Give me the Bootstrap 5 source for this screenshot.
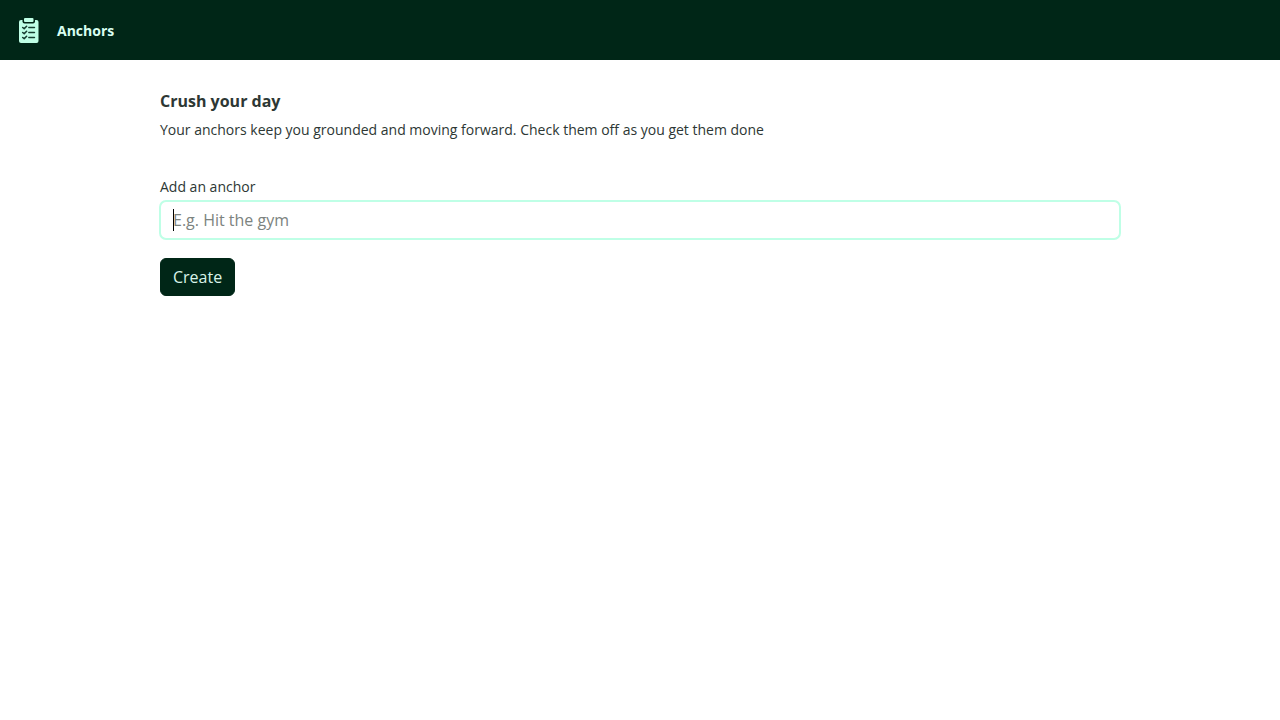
<!DOCTYPE html>
<html lang="en">
<head>
<meta charset="utf-8">
<meta name="viewport" content="width=device-width, initial-scale=1">
<title>Anchors</title>
<link href="https://cdn.jsdelivr.net/npm/bootstrap@5.3.0/dist/css/bootstrap.min.css" rel="stylesheet">
<style>
  :root { --ink: #002617; --mint: #bfffe6; --text: #2d3734; }
  body { font-family: "Open Sans", sans-serif; font-size: 14px; line-height: 20px; color: var(--text); }
  .topbar { background: var(--ink); min-height: 60px; padding: 0 16px; }
  .brand-link, .brand-link:hover { color: #d9fff1; font-size: 14px; font-weight: 700; gap: 16px; padding: 0; margin: 0; line-height: 20px; }
  .brand-name { padding-top: 2px; }
  .page { max-width: 960px; padding-top: 88px; }
  .page-title { font-size: 16px; line-height: 26px; font-weight: 700; margin-bottom: 6px; }
  .intro { margin-bottom: 37px; }
  .anchor-label { margin-bottom: 4px; }
  .field { margin-bottom: 19px; }
  .anchor-input { color: var(--ink); border-color: var(--mint); border-radius: 6px; height: 38px; padding: 6px 12px; }
  .anchor-input, .anchor-input:focus { border-color: var(--mint); box-shadow: 0 0 0 1px var(--mint); }
  .anchor-input::placeholder { color: #7c8380; }
  .caret { left: 13px; top: 8px; width: 1px; height: 22px; background: #000; pointer-events: none; }
  .create-btn, .create-btn:hover { background: var(--ink); border-color: var(--ink); color: #d9f3e9; }
</style>
</head>
<body>
<nav class="navbar fixed-top topbar">
  <a class="navbar-brand brand-link d-flex align-items-center" href="#">
    <svg width="25" height="27" viewBox="0 0 25 27" aria-hidden="true">
      <path fill="#bfffe6" d="M5 3h15.500a2 2 0 0 1 2 2v19a2 2 0 0 1-2 2H5a2 2 0 0 1-2-2V5a2 2 0 0 1 2-2z"/>
      <path fill="#002617" d="M6.500 3h12.500v1.500a2 2 0 0 1-2 2h-8.500a2 2 0 0 1-2-2z"/>
      <path fill="#bfffe6" d="M9 1h7.500a1 1 0 0 1 1 1v2a1 1 0 0 1-1 1H9a1 1 0 0 1-1-1V2a1 1 0 0 1 1-1z"/>
      <g fill="none" stroke="#173d30" stroke-width="1.600" stroke-linecap="round" stroke-linejoin="round">
        <path d="M6.700 10.500l1.500 1.200 2.400-2.400M6.700 15.500l1.500 1.200 2.400-2.400M6.700 20.500l1.500 1.200 2.400-2.400"/>
        <path stroke-width="1.400" d="M12.800 10.500h5.700M12.800 15.500h5.700M12.800 20.500h5.700"/>
      </g>
    </svg>
    <span class="brand-name">Anchors</span>
  </a>
</nav>
<main class="page container-fluid px-3 px-lg-0">
  <h1 class="page-title">Crush your day</h1>
  <p class="intro">Your anchors keep you grounded and moving forward. Check them off as you get them done</p>
  <form>
    <label class="form-label anchor-label" for="anchor">Add an anchor</label>
    <div class="field position-relative">
      <input class="form-control anchor-input" id="anchor" type="text" placeholder="E.g. Hit the gym" autocomplete="off">
      <span class="caret position-absolute" aria-hidden="true"></span>
    </div>
    <button class="btn create-btn" type="button">Create</button>
  </form>
</main>
<script src="https://cdn.jsdelivr.net/npm/bootstrap@5.3.0/dist/js/bootstrap.bundle.min.js"></script>
</body>
</html>
